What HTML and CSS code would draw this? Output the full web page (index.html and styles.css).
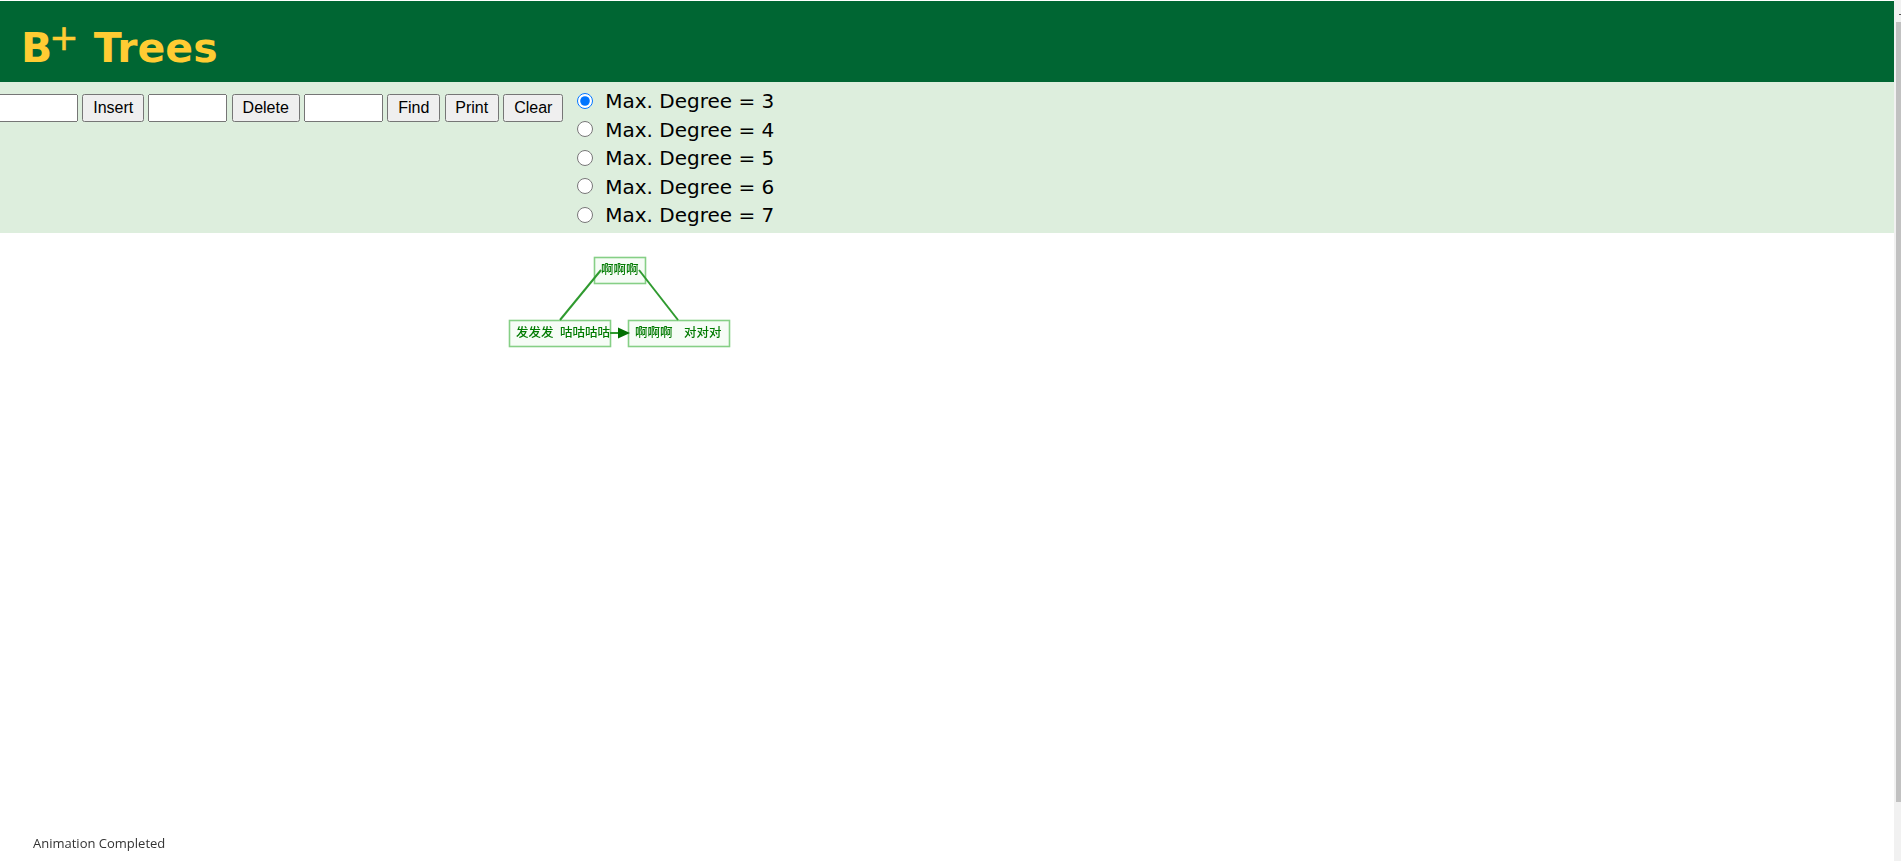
FILE: index.html
```html
<!DOCTYPE html>
<html lang="en">
<head>
<meta charset="utf-8">
<title>B+ Trees</title>
<link rel="stylesheet" href="styles.css">
</head>
<body>
<div class="page">
  <main class="main">
    <header class="header">
      <h1 class="title">B<sup class="plus">+</sup> Trees</h1>
    </header>
    <section class="controls">
      <div class="tools">
        <input class="field" type="text">
        <button class="btn" type="button">Insert</button>
        <input class="field" type="text">
        <button class="btn" type="button">Delete</button>
        <input class="field" type="text">
        <button class="btn" type="button">Find</button>
        <button class="btn" type="button">Print</button>
        <button class="btn" type="button">Clear</button>
      </div>
      <div class="degrees">
        <label class="degree"><input class="radio" type="radio" name="degree" checked>Max. Degree = 3</label>
        <label class="degree"><input class="radio" type="radio" name="degree">Max. Degree = 4</label>
        <label class="degree"><input class="radio" type="radio" name="degree">Max. Degree = 5</label>
        <label class="degree"><input class="radio" type="radio" name="degree">Max. Degree = 6</label>
        <label class="degree"><input class="radio" type="radio" name="degree">Max. Degree = 7</label>
      </div>
    </section>
    <svg class="canvas" viewBox="0 233 1894 628" xmlns="http://www.w3.org/2000/svg">
      <g class="tree">
        <rect class="node" x="594.5" y="257.5" width="51" height="26"/>
        <rect class="node" x="509.5" y="320.5" width="101" height="26"/>
        <rect class="node" x="628.5" y="320.5" width="101" height="26"/>
        <line class="edge" x1="601" y1="270" x2="560" y2="320"/>
        <line class="edge" x1="639" y1="270" x2="678" y2="320"/>
        <line class="edge" x1="610" y1="333" x2="620" y2="333"/>
        <polygon class="head" points="618,327.5 630,333 618,338.5"/>
        <text class="label" x="601" y="274">啊啊啊</text>
        <text class="label" x="516" y="337">发发发</text>
        <text class="label" x="560" y="337">咕咕咕咕</text>
        <text class="label" x="635" y="337">啊啊啊</text>
        <text class="label" x="684" y="337">对对对</text>
      </g>
      <text class="status" x="33" y="848">Animation Completed</text>
    </svg>
  </main>
  <aside class="scrollbar">
    <span class="arrow"></span>
    <span class="thumb"></span>
  </aside>
</div>
</body>
</html>
```

FILE: styles.css
```css
html, body {
  margin: 0;
  height: 100%;
  overflow: hidden;
  background: #fff;
}

.page {
  display: flex;
  height: 861px;
}

.main {
  flex: 1;
  min-width: 0;
  display: flex;
  flex-direction: column;
  overflow: hidden;
}

.header {
  height: 81px;
  margin-top: 1px;
  flex: none;
  background: #006633;
  padding-left: 21px;
  box-sizing: border-box;
}

.title {
  margin: 0;
  padding-top: 23px;
  font: bold 41px/48px "DejaVu Sans", Verdana, sans-serif;
  color: #ffcc33;
}

.plus {
  margin: 0 1px 0 -3px;
  font-size: 35px;
  font-weight: normal;
  line-height: 0;
  vertical-align: 12px;
  -webkit-text-stroke: 0.6px #ffcc33;
}

.controls {
  flex: none;
  height: 151px;
  background: #ddeedd;
  display: flex;
  align-items: flex-start;
  gap: 14px;
  box-sizing: border-box;
}

.tools {
  display: flex;
  align-items: center;
  gap: 4.4px;
  margin-left: -1px;
  padding-top: 12px;
}

.field {
  width: 79px;
  height: 28px;
  box-sizing: border-box;
  margin: 0;
  padding: 1px 2px;
  font: 16px "Liberation Sans", Arial, sans-serif;
}

.btn {
  height: 28px;
  margin: 0;
  padding: 1px 8.8px;
  font: 16px "Liberation Sans", Arial, sans-serif;
  color: #000;
}

.degrees {
  display: flex;
  flex-direction: column;
  padding-top: 5px;
}

.degree {
  display: flex;
  align-items: center;
  height: 28.5px;
  font: 20px "DejaVu Sans", Verdana, sans-serif;
  color: #000;
}

.radio {
  width: 16px;
  height: 16px;
  margin: 0 12px 1px 0;
}

.canvas {
  display: block;
  flex: 1;
  width: 100%;
  min-height: 0;
}

.tree {
  filter: blur(0.7px);
}

.node {
  fill: #f6fcf6;
  stroke: #86cf86;
  stroke-width: 1.6;
}

.edge {
  stroke: #2f9a2f;
  stroke-width: 2;
}

.head {
  fill: #006f00;
}

.label {
  font: 500 12.5px "Noto Sans CJK SC", sans-serif;
  fill: #007a00;
}

.status {
  font: 13px "Open Sans", sans-serif;
  fill: #333;
  filter: blur(0.5px);
}

.scrollbar {
  flex: none;
  width: 7px;
  background: #f1f1f1;
  position: relative;
}

.arrow {
  position: absolute;
  right: 0;
  top: 14px;
  width: 2px;
  height: 1px;
  background: #555;
}

.thumb {
  position: absolute;
  right: 0;
  top: 22px;
  width: 5px;
  height: 780px;
  background: #c1c1c1;
}
```
